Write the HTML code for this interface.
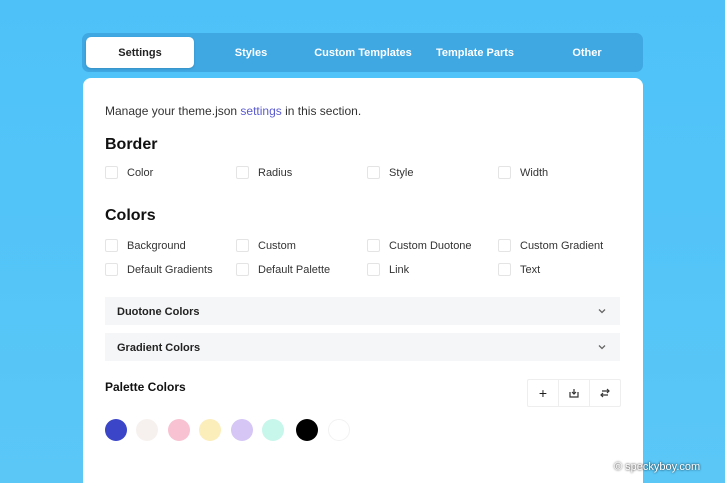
<!DOCTYPE html>
<html><head><style>
*{margin:0;padding:0;box-sizing:border-box}
html,body{width:725px;height:483px;overflow:hidden}
body{background:linear-gradient(180deg,#4ec2f8 0%,#5ac7f7 100%);font-family:"Liberation Sans",sans-serif;position:relative;color:#1e1e1e}
.a{position:absolute;white-space:nowrap}
.tabs{left:82px;top:33px;width:561px;height:39px;background:#3fa7e2;border-radius:7px}
.tab{position:absolute;top:53px;transform:translate(-50%,-50%);color:#fff;font-size:11px;font-weight:bold}
.stab{left:86px;top:37px;width:108px;height:31px;background:#fff;border-radius:5px;box-shadow:0 1px 2px rgba(0,0,0,.15)}
.card{left:83px;top:78px;width:560px;height:405px;background:#fff;border-radius:8px 8px 0 0}
.t{font-size:11px;color:#333}
.cb{width:13px;height:13px;border:1px solid #e4e4e4;border-radius:2px}
.h{font-size:16px;font-weight:bold;color:#111}
.acc{left:105px;width:515px;height:28px;background:#f5f6f8;font-size:11px;font-weight:bold;color:#222;padding:9px 12px}
.acc svg{position:absolute;right:14px;top:11px}
.dot{width:22px;height:22px;border-radius:50%;top:419px}
</style></head><body>
<div class="a tabs"></div>
<div class="a stab"></div>
<div class="tab" style="left:140px;color:#222">Settings</div>
<div class="tab" style="left:251px">Styles</div>
<div class="tab" style="left:363px">Custom Templates</div>
<div class="tab" style="left:475px">Template Parts</div>
<div class="tab" style="left:587px">Other</div>
<div class="a card"></div>
<div class="a" style="left:105px;top:104px;font-size:12px;color:#333">Manage your theme.json <span style="color:#5a5ad0">settings</span> in this section.</div>
<div class="a h" style="left:105px;top:136px">Border</div>
<div class="a cb" style="left:105px;top:166px"></div><div class="a t" style="left:127px;top:167px">Color</div>
<div class="a cb" style="left:236px;top:166px"></div><div class="a t" style="left:258px;top:167px">Radius</div>
<div class="a cb" style="left:367px;top:166px"></div><div class="a t" style="left:389px;top:167px">Style</div>
<div class="a cb" style="left:498px;top:166px"></div><div class="a t" style="left:520px;top:167px">Width</div>
<div class="a h" style="left:105px;top:207px">Colors</div>
<div class="a cb" style="left:105px;top:239px"></div><div class="a t" style="left:127px;top:240px">Background</div>
<div class="a cb" style="left:236px;top:239px"></div><div class="a t" style="left:258px;top:240px">Custom</div>
<div class="a cb" style="left:367px;top:239px"></div><div class="a t" style="left:389px;top:240px">Custom Duotone</div>
<div class="a cb" style="left:498px;top:239px"></div><div class="a t" style="left:520px;top:240px">Custom Gradient</div>
<div class="a cb" style="left:105px;top:263px"></div><div class="a t" style="left:127px;top:264px">Default Gradients</div>
<div class="a cb" style="left:236px;top:263px"></div><div class="a t" style="left:258px;top:264px">Default Palette</div>
<div class="a cb" style="left:367px;top:263px"></div><div class="a t" style="left:389px;top:264px">Link</div>
<div class="a cb" style="left:498px;top:263px"></div><div class="a t" style="left:520px;top:264px">Text</div>
<div class="a acc" style="top:297px">Duotone Colors<svg width="8" height="6" viewBox="0 0 8 6" fill="none" stroke="#666" stroke-width="1.3"><path d="M1 1.5l3 3 3-3"/></svg></div>
<div class="a acc" style="top:333px">Gradient Colors<svg width="8" height="6" viewBox="0 0 8 6" fill="none" stroke="#666" stroke-width="1.3"><path d="M1 1.5l3 3 3-3"/></svg></div>
<div class="a" style="left:105px;top:380px;font-size:12px;font-weight:bold;color:#111">Palette Colors</div>
<div class="a" style="left:527px;top:379px;width:94px;height:28px;border:1px solid #eee;border-radius:2px;display:flex">
<div style="flex:1;border-right:1px solid #eee;text-align:center;line-height:26px;font-size:14px">+</div>
<div style="flex:1;border-right:1px solid #eee;display:flex;align-items:center;justify-content:center"><svg width="12" height="12" viewBox="0 0 12 12" fill="none" stroke="#333" stroke-width="1.2"><path d="M2 5v5h8V5M6 2v5M4 5l2 2 2-2"/></svg></div>
<div style="flex:1;display:flex;align-items:center;justify-content:center"><svg width="12" height="12" viewBox="0 0 12 12" fill="none" stroke="#333" stroke-width="1.2"><path d="M3 4h7M8 2l2 2-2 2M9 8H2M4 6L2 8l2 2"/></svg></div>
</div>
<div class="a dot" style="left:105px;background:#3a45c8"></div>
<div class="a dot" style="left:136px;background:#f6f1ee"></div>
<div class="a dot" style="left:168px;background:#f8c2d2"></div>
<div class="a dot" style="left:199px;background:#fbeebb"></div>
<div class="a dot" style="left:231px;background:#d5c6f6"></div>
<div class="a dot" style="left:262px;background:#c7f6ea"></div>
<div class="a dot" style="left:296px;background:#000"></div>
<div class="a dot" style="left:328px;background:#fff;border:1px solid #f2f2f2"></div>
<div class="a" style="left:614px;top:461px;font-size:11px;color:#fff;text-shadow:0 0 2px #000">© speckyboy.com</div>
</body></html>
